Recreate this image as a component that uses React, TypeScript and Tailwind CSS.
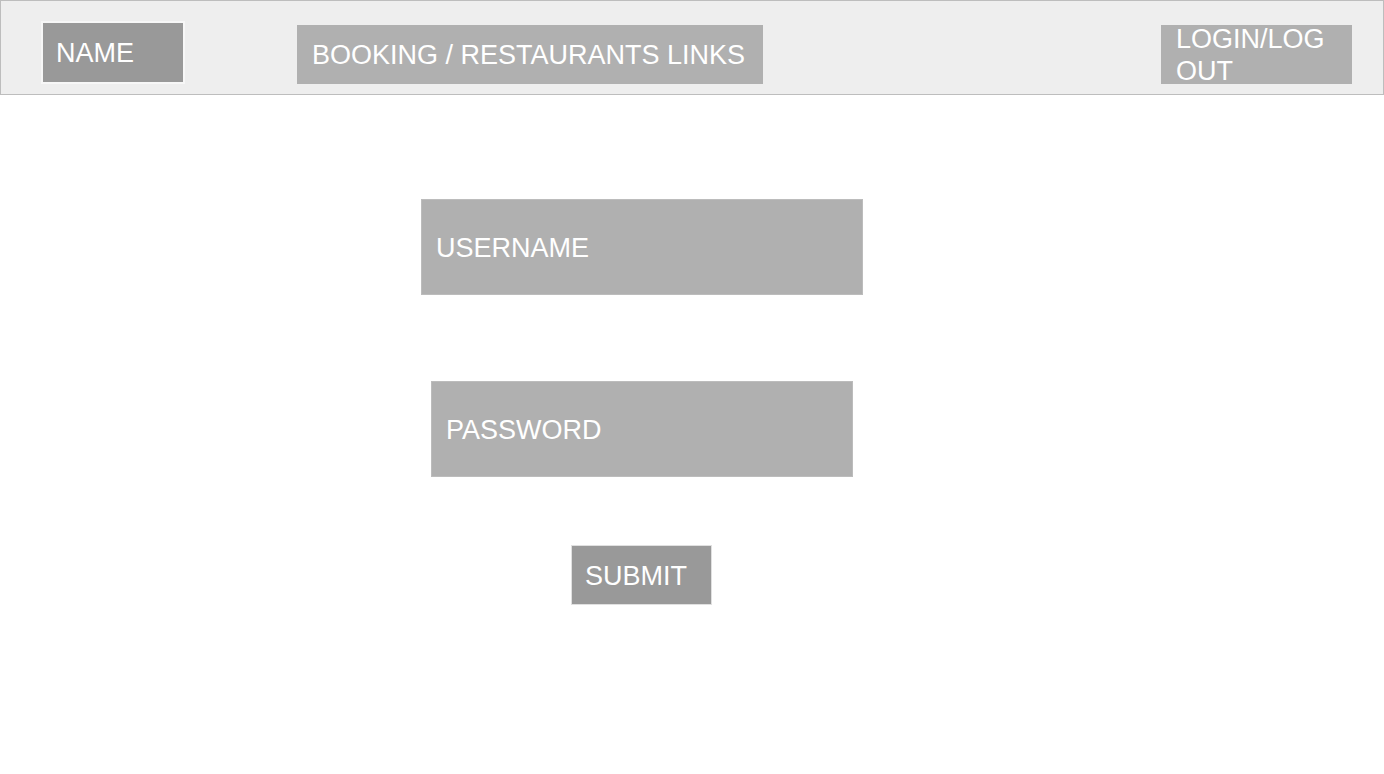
import React from "react";

const App: React.FC = () => {
  return (
    <div className="min-h-[774px] w-[1384px] bg-white font-['Liberation_Sans',Arial,sans-serif] text-white">
      <header className="flex h-[95px] items-start border border-[#bdbdbd] bg-[#eeeeee]">
        <div className="ml-[40px] mt-[20px] flex h-[63px] w-[144px] items-center border-2 border-[#f7f7f7] bg-[#999999] pl-[13px] pt-[1px] text-[27px] leading-none">
          NAME
        </div>
        <div className="ml-[112px] mt-[24px] flex h-[59px] w-[466px] items-center bg-[#b0b0b0] pl-[15px] pt-[2px] text-[27px] leading-none">
          BOOKING / RESTAURANTS LINKS
        </div>
        <div className="ml-auto mr-[31px] mt-[24px] flex h-[59px] w-[191px] items-center overflow-visible bg-[#b0b0b0] pl-[15px] text-[27px] leading-[32px]">
          <span className="block">
            LOGIN/LOG
            <br />
            OUT
          </span>
        </div>
      </header>

      <main className="ml-[421px] flex w-[442px] flex-col items-center pt-[104px]">
        <div className="flex h-[96px] w-[442px] items-center border border-[#bcbcbc] bg-[#b0b0b0] pl-[14px] pt-[2px] text-[27px] leading-none">
          USERNAME
        </div>
        <div className="mt-[86px] flex h-[96px] w-[422px] items-center border border-[#bcbcbc] bg-[#b0b0b0] pl-[14px] pt-[2px] text-[27px] leading-none">
          PASSWORD
        </div>
        <div className="mt-[68px] mr-[1px] flex h-[60px] w-[141px] items-center border border-[#e0e0e0] bg-[#999999] pl-[13px] pt-[2px] text-[27px] leading-none">
          SUBMIT
        </div>
      </main>
    </div>
  );
};

export default App;
